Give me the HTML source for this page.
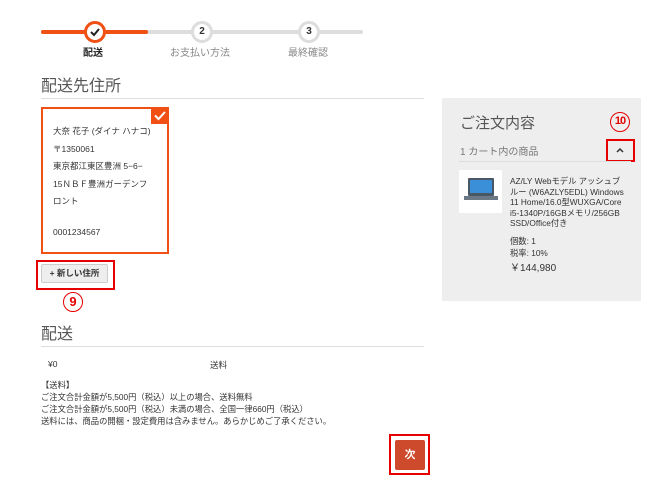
<!DOCTYPE html>
<html><head><meta charset="utf-8"><style>
*{margin:0;padding:0;box-sizing:border-box}
body{width:663px;height:489px;background:#fff;font-family:"Liberation Sans","Noto Sans CJK JP",sans-serif;color:#333;position:relative;overflow:hidden}
.a{position:absolute;white-space:nowrap}
.circ{position:absolute;width:22px;height:22px;border-radius:50%;background:#fff;font-size:10px;font-weight:bold;text-align:center;line-height:16px}
.num{position:absolute;color:#e60000;border:1.5px solid #e60000;border-radius:50%;width:20px;height:20px;font-weight:bold;font-size:13px;text-align:center;line-height:17px}
.red{position:absolute;border:2px solid #e60000}
</style></head><body>
<div class="a" style="left:41px;top:30px;width:322px;height:4px;background:#ddd;border-radius:2px"></div>
<div class="a" style="left:41px;top:30px;width:107px;height:4px;background:#f05014;border-radius:2px"></div>
<div class="circ" style="left:84px;top:21px;border:3px solid #f05014"><svg width="12" height="12" viewBox="0 0 12 12" style="margin-top:2px"><path d="M2 6l3 3 5-6" stroke="#222" stroke-width="2" fill="none"/></svg></div>
<div class="circ" style="left:191px;top:21px;border:3px solid #ddd">2</div>
<div class="circ" style="left:298px;top:21px;border:3px solid #ddd">3</div>
<div class="a" style="left:83px;top:44px;font-size:10px;font-weight:bold;color:#222">配送</div>
<div class="a" style="left:170px;top:44px;font-size:10px;color:#888">お支払い方法</div>
<div class="a" style="left:288px;top:44px;font-size:10px;color:#888">最終確認</div>
<div class="a" style="left:41px;top:72px;font-size:16px;color:#555">配送先住所</div>
<div class="a" style="left:41px;top:98px;width:383px;height:1px;background:#ddd"></div>
<div class="a" style="left:41px;top:107px;width:128px;height:147px;border:2px solid #f05014"></div>
<div class="a" style="left:151px;top:107px;width:18px;height:17px;background:#f05014"><svg width="18" height="17"><path d="M4 8.5l3.5 3.5 6.5-7" stroke="#fff" stroke-width="2" fill="none"/></svg></div>
<div class="a" style="left:53px;top:123px;font-size:8.5px;line-height:17.5px;color:#333">大奈 花子 (ダイナ ハナコ)<br>〒1350061<br>東京都江東区豊洲 5−6−<br>15ＮＢＦ豊洲ガーデンフ<br>ロント</div>
<div class="a" style="left:53px;top:227px;font-size:8.5px;color:#333">0001234567</div>
<div class="a" style="left:41px;top:264px;width:67px;height:19px;background:#eee;border:1px solid #ccc;border-radius:2px;font-size:8.5px;font-weight:bold;text-align:center;line-height:17px">+ 新しい住所</div>
<div class="red" style="left:36px;top:260px;width:79px;height:30px"></div>
<div class="num" style="left:63px;top:292px">9</div>
<div class="a" style="left:41px;top:320px;font-size:16px;color:#555">配送</div>
<div class="a" style="left:41px;top:346px;width:383px;height:1px;background:#ddd"></div>
<div class="a" style="left:48px;top:359px;font-size:8.5px">¥0</div>
<div class="a" style="left:210px;top:359px;font-size:8.5px">送料</div>
<div class="a" style="left:41px;top:379px;font-size:8.3px;line-height:12px">【送料】<br>ご注文合計金額が5,500円（税込）以上の場合、送料無料<br>ご注文合計金額が5,500円（税込）未満の場合、全国一律660円（税込）<br>送料には、商品の開梱・設定費用は含みません。あらかじめご了承ください。</div>
<div class="a" style="left:395px;top:440px;width:30px;height:30px;background:#cd4a2c;border-radius:2px;color:#fff;font-size:11px;font-weight:bold;text-align:center;line-height:30px">次</div>
<div class="red" style="left:389px;top:434px;width:41px;height:41px"></div>
<div class="a" style="left:442px;top:98px;width:199px;height:203px;background:#eee"></div>
<div class="a" style="left:460px;top:112px;font-size:15px;color:#555">ご注文内容</div>
<div class="num" style="left:610px;top:112px;font-size:11px;letter-spacing:-1px">10</div>
<div class="a" style="left:460px;top:143px;font-size:10px;color:#777">1 カート内の商品</div>
<div class="red" style="left:606px;top:139px;width:29px;height:23px"></div>
<svg class="a" style="left:615px;top:146px" width="10" height="8"><path d="M2 6l3-3 3 3" stroke="#333" stroke-width="1.5" fill="none"/></svg>
<div class="a" style="left:459px;top:161px;width:172px;height:1px;background:#ddd"></div>
<div class="a" style="left:459px;top:170px;width:43px;height:43px;background:#fff"></div>
<div class="a" style="left:468px;top:178px;width:26px;height:18px;background:#4a5866;border-radius:1px"><div style="margin:2px;width:22px;height:13px;background:#3a8fd8"></div></div>
<div class="a" style="left:464px;top:196px;width:34px;height:4px;background:#6b7885"></div>
<div class="a" style="left:510px;top:176px;font-size:8.3px;line-height:10.5px;color:#333">AZ/LY Webモデル アッシュブ<br>ルー (W6AZLY5EDL) Windows<br>11 Home/16.0型WUXGA/Core<br>i5-1340P/16GBメモリ/256GB<br>SSD/Office付き</div>
<div class="a" style="left:510px;top:235px;font-size:8.3px;line-height:12px;color:#333">個数: 1<br>税率: 10%</div>
<div class="a" style="left:510px;top:259px;font-size:10px;color:#333">￥144,980</div>
</body></html>
